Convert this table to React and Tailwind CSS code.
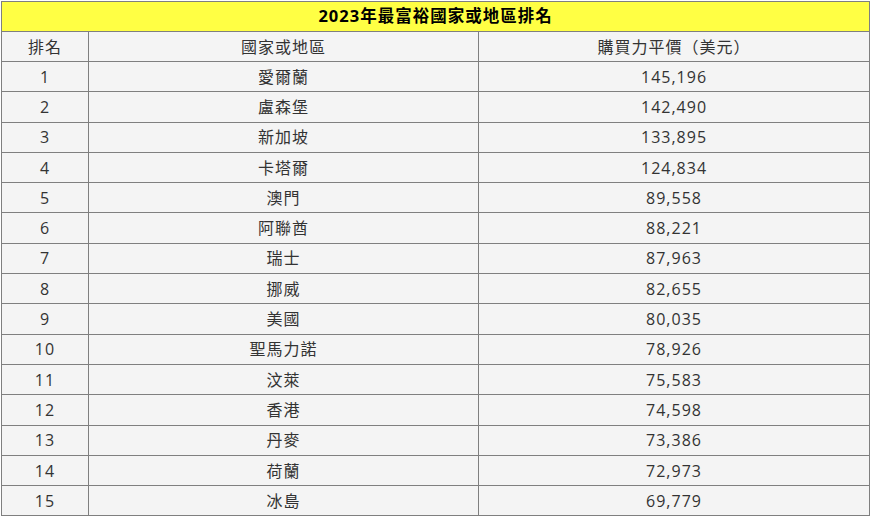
const rows = [
  [1, "愛爾蘭", "145,196"],
  [2, "盧森堡", "142,490"],
  [3, "新加坡", "133,895"],
  [4, "卡塔爾", "124,834"],
  [5, "澳門", "89,558"],
  [6, "阿聯酋", "88,221"],
  [7, "瑞士", "87,963"],
  [8, "挪威", "82,655"],
  [9, "美國", "80,035"],
  [10, "聖馬力諾", "78,926"],
  [11, "汶萊", "75,583"],
  [12, "香港", "74,598"],
  [13, "丹麥", "73,386"],
  [14, "荷蘭", "72,973"],
  [15, "冰島", "69,779"],
];

const font = { fontFamily: '"Open Sans", "Noto Sans CJK TC", sans-serif' };

export default function App() {
  return (
    <div className="p-px bg-white" style={font}>
      <table className="w-[868px] border-collapse table-fixed text-[16px] tracking-[1px] text-[#333] bg-[#f4f4f4]">
        <colgroup>
          <col className="w-[87px]" />
          <col className="w-[390px]" />
          <col className="w-[391px]" />
        </colgroup>
        <thead>
          <tr>
            <th
              colSpan={3}
              className="h-[30px] p-0 border border-[#7f7f7f] bg-[#ffff44] text-black text-[16.5px] font-bold text-center"
            >
              2023年最富裕國家或地區排名
            </th>
          </tr>
          <tr>
            <th className="h-[30px] p-0 border border-[#7f7f7f] font-normal text-center">排名</th>
            <th className="h-[30px] p-0 border border-[#7f7f7f] font-normal text-center">國家或地區</th>
            <th className="h-[30px] p-0 border border-[#7f7f7f] font-normal text-center">購買力平價（美元）</th>
          </tr>
        </thead>
        <tbody>
          {rows.map(([rank, name, ppp]) => (
            <tr key={rank}>
              <td className="h-[30.3px] p-0 border border-[#7f7f7f] text-center">{rank}</td>
              <td className="h-[30.3px] p-0 border border-[#7f7f7f] text-center">{name}</td>
              <td className="h-[30.3px] p-0 border border-[#7f7f7f] text-center">{ppp}</td>
            </tr>
          ))}
        </tbody>
      </table>
    </div>
  );
}
